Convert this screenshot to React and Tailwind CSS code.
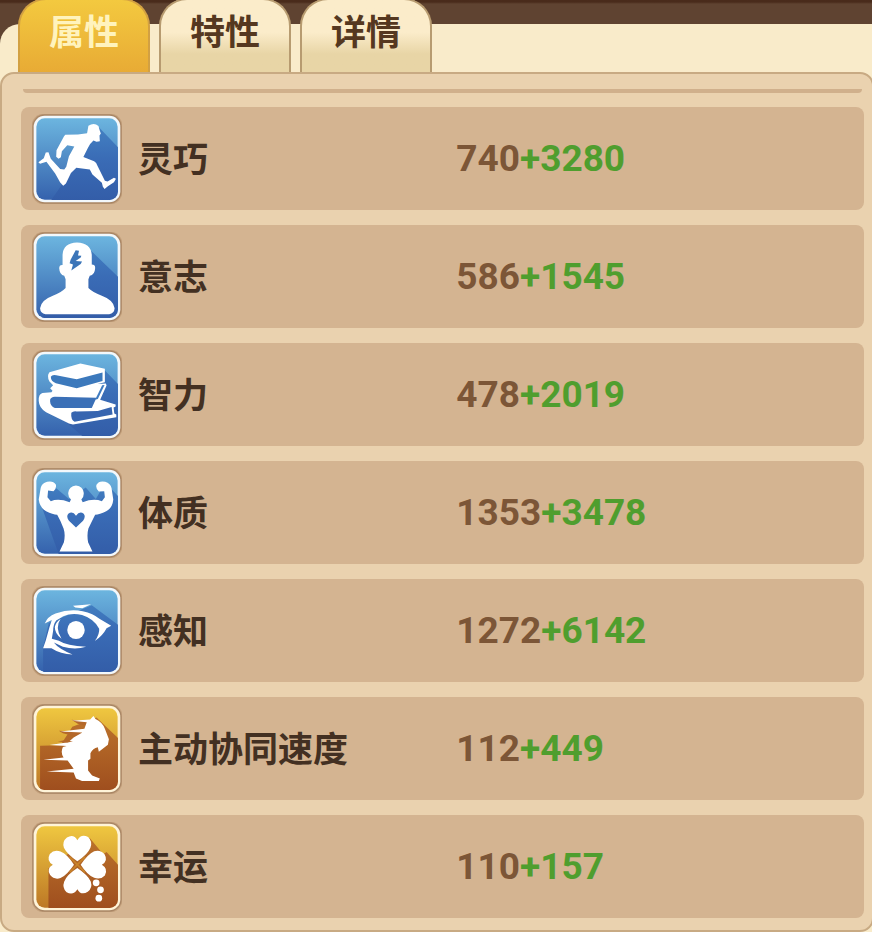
import React, { useState } from "react";

const AgilityIcon = () => (
  <>
    <path d="M212 54 L277 122 V280 H76 L112 228 Z" fill="url(#shade-blue)" />
    <path
      d="M188 57 Q205 46 218 58 L222 72 L225 80 L221 86 L222 103 L212 105 L203 101 Q194 108 186 124 L173 150 L205 163 Q214 168 216 178 L237 221 L245 223 L264 212 L270 215 L264 225 L246 237 L236 245 L231 239 L228 227 L200 202 L192 187 L152 182 L136 198 L121 229 L113 236 L104 226 L89 199 L63 164 L44 170 L39 166 L55 154 L61 137 L69 136 L76 155 L104 186 L116 187 L122 179 L130 148 L146 119 L125 115 L109 133 L106 151 L99 155 L92 149 L93 130 L115 89 L119 84 L157 83 L184 79 Z"
      fill="#fff"
    />
  </>
);

const WillIcon = () => (
  <>
    <path d="M196 78 L277 156 V280 H46 L120 190 Z" fill="url(#shade-blue)" />
    <path
      d="M111 120 V90 Q113 54 154 53 Q195 54 198 90 V119 Q209 119 208 130 Q207 150 192 152 L188 163 V189 Q202 203 228 212 Q263 225 266 249 Q265 264 250 267 H60 Q45 264 44 249 Q47 225 82 212 Q107 203 120 189 V163 L116 152 Q102 150 101 130 Q101 119 111 120 Z"
      fill="#fff"
    />
    <path d="M150 76 L160 78 L157 92 L167 93 L165 98 L150 108 L169 110 L165 117 L137 137 L142 119 L132 115 L135 105 Z" fill="#3b75b8" />
  </>
);

const IntellectIcon = () => (
  <>
    <path d="M232 78 L277 124 V280 H172 L90 210 Z" fill="url(#shade-blue)" />
    <path
      d="M72 88 L164 62 L237 78 V118 L215 123 L240 122 L242 128 L223 170 L269 184 V190 L263 193 L265 211 L271 214 V222 L142 244 L130 241 L62 207 Q41 195 40 173 Q39 154 51 150 L78 148 L81 143 L74 136 L83 127 L72 116 Q63 99 72 88 Z"
      fill="#fff"
    />
    <path d="M76 102 Q80 94 92 97 L153 109 L230 89 V114 L153 136 L91 121 Q76 116 76 102 Z" fill="#3c79bc" />
    <path d="M74 170 Q76 162 88 161 L212 164 L198 195 L88 195 Q75 189 74 176 Z" fill="#3b70b7" />
    <path d="M229 127 L236 126 L216 168 L208 170 Z" fill="#3f7bc0" />
    <path d="M137 209 Q143 203 153 205 L216 204 L257 192 L260 214 L147 236 Q135 230 137 209 Z" fill="#3765b0" />
  </>
);

const BodyIcon = () => (
  <>
    <path d="M80 72 L130 114 L180 80 L210 114 L238 66 L277 106 V280 H100 L42 118 Z" fill="url(#shade-blue)" />
    <path
      d="M46 81 Q49 68 65 63 Q83 59 91 71 Q94 84 84 91 L68 89 L66 109 L76 121 Q99 111 132 124 L136 116 Q127 108 128 96 Q130 76 151 74 Q172 76 174 96 Q175 109 167 116 L171 124 Q204 111 228 121 L237 109 L235 91 L219 92 Q209 84 212 72 Q219 59 238 63 Q254 68 257 82 L262 116 Q260 141 241 151 Q221 161 208 161 Q198 181 188 202 Q183 220 187 243 L200 271 H102 L115 243 Q120 220 114 202 Q106 180 95 161 Q82 161 62 151 Q43 140 40 116 Z"
      fill="#fff"
    />
    <path d="M151 199 L130 179 Q121 166 128 158 Q141 148 151 164 Q162 148 174 158 Q181 166 172 179 Z" fill="#3a6eb8" />
  </>
);

const SenseIcon = () => (
  <>
    <path d="M158 96 L198 79 L277 138 V280 H53 V206 L70 132 Z" fill="url(#shade-blue)" />
    <path d="M142 81 L196 76 L170 88 L149 86 Z" fill="#fff" />
    <path
      d="M58 134 Q66 113 90 104 Q132 89 171 97 Q202 104 222 120 L256 140 L242 148 Q231 170 207 186 Q222 164 220 149 Q205 119 169 108 Q137 101 113 112 L92 125 Q83 137 83 155 L79 179 L100 185 Q123 200 181 203 Q149 213 112 203 L85 190 Q98 208 141 226 Q105 225 78 207 L53 207 L61 184 L72 145 L79 123 Z"
      fill="#fff"
    />
    <path d="M105 120 Q87 145 108 179 Q88 165 88 145 Q90 130 105 120 Z" fill="#fff" />
    <ellipse cx="151" cy="153" rx="26" ry="27" fill="#fff" />
  </>
);

const SpeedIcon = () => (
  <>
    <path d="M212 62 L277 124 V280 H44 V146 L105 145 L140 90 Z" fill="url(#shade-gold)" />
    <path d="M138 69 L190 75 L190 90 L156 81 Z M100 102 L170 107 L170 124 L112 109 Z" fill="#b4682a" />
    <path
      d="M203 58 L209 67 Q229 76 237 96 L249 127 L246 143 L219 164 L216 151 Q201 154 194 169 L194 185 L187 190 L187 220 L199 235 L222 244 L219 251 H169 L151 244 L144 226 L64 223 L144 215 L126 190 L54 188 L114 181 Q104 167 112 150 L123 147 L72 144 L128 136 L144 122 L170 107 L105 104 L176 96 L183 76 L139 72 L193 68 Z"
      fill="#fff"
    />
    <path d="M97 134 L116 130 L142 134 L125 137 Z" fill="#b4682a" />
  </>
);

const HEART = "M155 139 Q124 118 115 99 Q109 80 124 68 Q144 56 155 76 Q167 56 187 67 Q201 80 194 99 Q186 119 155 139 Z";

const LuckIcon = () => (
  <>
    <path d="M192 70 L232 118 L242 111 L277 150 V280 H69 V160 Z" fill="url(#shade-gold)" />
    <path d={HEART} fill="#fff" />
    <path d={HEART} fill="#fff" transform="rotate(90 155 149)" />
    <path d={HEART} fill="#fff" transform="rotate(180 155 149)" />
    <path d={HEART} fill="#fff" transform="rotate(270 155 149)" />
    <path d="M132 126 L178 172 M178 126 L132 172" stroke="#c98329" strokeWidth="5" />
    <circle cx="211" cy="203" r="10" fill="#fff" />
    <circle cx="224" cy="224" r="10" fill="#fff" />
    <circle cx="219" cy="249" r="10" fill="#fff" />
  </>
);

const TABS = ["属性", "特性", "详情"];

const STATS = [
  { name: "灵巧", base: 740, bonus: 3280, color: "blue", Icon: AgilityIcon },
  { name: "意志", base: 586, bonus: 1545, color: "blue", Icon: WillIcon },
  { name: "智力", base: 478, bonus: 2019, color: "blue", Icon: IntellectIcon },
  { name: "体质", base: 1353, bonus: 3478, color: "blue", Icon: BodyIcon },
  { name: "感知", base: 1272, bonus: 6142, color: "blue", Icon: SenseIcon },
  { name: "主动协同速度", base: 112, bonus: 449, color: "gold", Icon: SpeedIcon },
  { name: "幸运", base: 110, bonus: 157, color: "gold", Icon: LuckIcon },
];

// gradients and clip shared by all stat icons
const IconDefs = () => (
  <svg className="absolute size-0" aria-hidden="true">
    <defs>
      <linearGradient id="fill-blue" x1="0" y1="0" x2="0" y2="1">
        <stop offset="0" stopColor="#6cb5df" />
        <stop offset="1" stopColor="#3562ad" />
      </linearGradient>
      <linearGradient id="fill-gold" x1="0" y1="0" x2="0" y2="1">
        <stop offset="0" stopColor="#efc740" />
        <stop offset="1" stopColor="#bd7826" />
      </linearGradient>
      <linearGradient id="shade-blue" gradientUnits="userSpaceOnUse" x1="0" y1="70" x2="0" y2="280">
        <stop offset="0" stopColor="#427fc1" />
        <stop offset="0.4" stopColor="#3a6cb6" />
        <stop offset="1" stopColor="#335da8" />
      </linearGradient>
      <linearGradient id="shade-gold" gradientUnits="userSpaceOnUse" x1="0" y1="70" x2="0" y2="280">
        <stop offset="0" stopColor="#bb722b" />
        <stop offset="1" stopColor="#9f4e1e" />
      </linearGradient>
      <clipPath id="icon-clip">
        <rect x="32" y="34" width="244" height="244" rx="25" />
      </clipPath>
    </defs>
  </svg>
);

const StatIcon = ({ color, children }) => (
  <svg viewBox="20 22 268 268" className="size-[90px] shrink-0" aria-hidden="true">
    <rect x="18" y="20" width="272" height="272" rx="40" fill="#c4a17d" />
    <rect x="21" y="23" width="266" height="266" rx="37" fill="#a98665" />
    <rect x="25" y="27" width="258" height="258" rx="33" fill={color === "blue" ? "#f3f8fb" : "#fff4d8"} />
    <rect x="33" y="35" width="242" height="242" rx="25" fill={`url(#fill-${color})`} />
    <g clipPath="url(#icon-clip)">{children}</g>
  </svg>
);

const StatRow = ({ stat }) => {
  const { name, base, bonus, color, Icon } = stat;
  return (
    <li className="flex items-center h-[103px] pl-[11px] rounded-lg bg-[#d4b491]">
      <StatIcon color={color}>
        <Icon />
      </StatIcon>
      <span className="flex-1 pl-4 pb-1 text-[35px] leading-10 font-bold text-[#433022]">
        {name}
      </span>
      <span className="w-[49%] font-[Roboto,sans-serif] text-[37px] leading-10 font-bold text-[#7c5637]">
        {base}
        <span className="text-[#4f9e2e]">+{bonus}</span>
      </span>
    </li>
  );
};

const App = () => {
  const [activeTab, setActiveTab] = useState(0);

  return (
    <div className="min-h-screen overflow-hidden bg-linear-to-b from-[#492b1b] from-[2px] to-[#5f4331] to-[4px] pt-6 font-['Noto_Sans_CJK_SC',sans-serif]">
      <IconDefs />
      <main className="rounded-tl-[20px] bg-[#f9ebca] pb-px">
        <nav className="flex gap-[9px] pl-[18px]" role="tablist">
          {TABS.map((tab, i) => (
            <button
              key={tab}
              type="button"
              role="tab"
              aria-selected={activeTab === i}
              onClick={() => setActiveTab(i)}
              className={`-mt-[26px] h-[74px] w-[132px] pb-3 rounded-t-[28px] border-2 border-b-0 text-[35px] leading-10 font-bold ${
                activeTab === i
                  ? "border-[#d2a042] bg-linear-to-b from-[#f3c93f] to-[#e8ab35] text-[#fff3bd]"
                  : "border-[#b79b70] bg-linear-to-b from-[#fbecca] from-45% to-[#e8d5a6] to-75% text-[#553820]"
              }`}
            >
              {tab}
            </button>
          ))}
        </nav>

        <section className="-mr-[2px] rounded-[14px] border-2 border-[#c8aa83] bg-[#ead2af] pt-[15px] pb-3 pl-[19px] pr-2">
          {/* bottom edge of the row scrolled out above */}
          <div className="mx-[2px] mb-[14px] h-1 rounded-b bg-[#d0b08c]" />
          <ul className="flex flex-col gap-[15px]">
            {STATS.map((stat) => (
              <StatRow key={stat.name} stat={stat} />
            ))}
          </ul>
        </section>
      </main>
    </div>
  );
};

export default App;
